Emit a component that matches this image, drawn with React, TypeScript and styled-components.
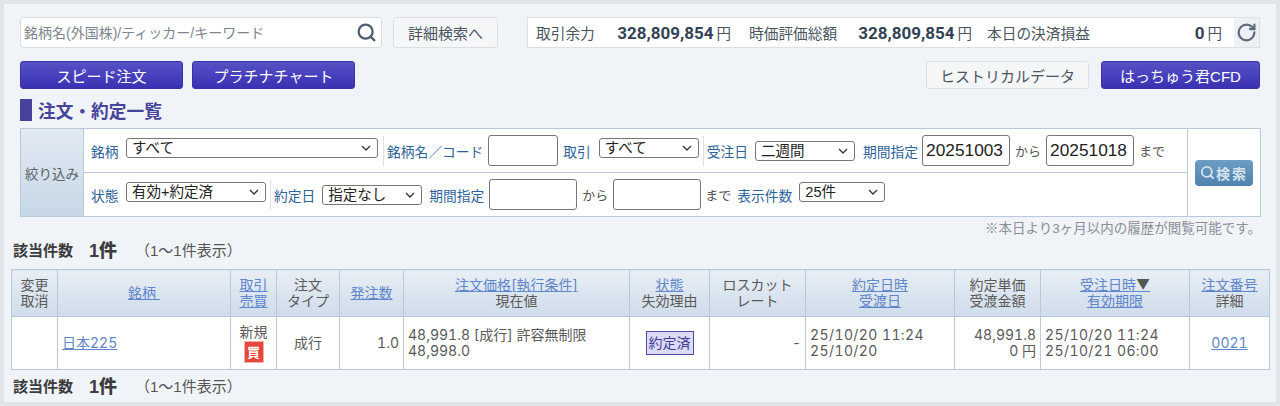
import React from "react";
import styled, { createGlobalStyle } from "styled-components";
import { Search, RotateCw } from "lucide-react";

const FONT = `"Liberation Sans", "Noto Sans CJK JP", sans-serif`;
const TABLE_FONT = `Inter, "Noto Sans CJK JP", sans-serif`;
const CHEVRON = `url("data:image/svg+xml,%3Csvg xmlns='http://www.w3.org/2000/svg' width='10' height='6' viewBox='0 0 10 6'%3E%3Cpath d='M1 1l4 4 4-4' fill='none' stroke='%23333' stroke-width='1.3'/%3E%3C/svg%3E")`;

const Global = createGlobalStyle`
  html, body { margin: 0; padding: 0; background: #dfe4e9; }
  body { font-family: ${FONT}; width: 1280px; height: 406px; overflow: hidden; }
`;

const Panel = styled.div`
  margin: 4px;
  width: 1272px;
  height: 398px;
  box-sizing: border-box;
  background: #f0f3f8;
  padding: 13px 7px 0;
  color: #444;
`;
const TopRow = styled.div`
  display: flex;
  align-items: stretch;
  height: 31px;
  padding: 0 9px;
`;
const SearchBox = styled.div`
  width: 362px;
  box-sizing: border-box;
  background: #fff;
  border: 1px solid #d9dee5;
  border-radius: 3px;
  display: flex;
  align-items: center;
  justify-content: space-between;
  padding: 0 4px 1px 3px;
  color: #7d858e;
  font-size: 14px;
`;
const LightButton = styled.button<{ $w: number; $l?: number }>`
  width: ${(p) => p.$w}px;
  margin-left: ${(p) => p.$l ?? 0}px;
  box-sizing: border-box;
  background: #f5f6f8;
  border: 1px solid #dcdfe4;
  border-radius: 3px;
  color: #4a5560;
  font: 15px ${FONT};
  padding: 0;
`;
const Balance = styled.div`
  margin-left: 29px;
  width: 733px;
  box-sizing: border-box;
  background: #fff;
  border: 1px solid #dcdfe5;
  display: flex;
  align-items: stretch;
`;
const BalanceCell = styled.div<{ $w: number; $pl: number; $pr: number }>`
  width: ${(p) => p.$w}px;
  box-sizing: border-box;
  display: flex;
  align-items: center;
  justify-content: space-between;
  padding: 0 ${(p) => p.$pr}px 0 ${(p) => p.$pl}px;
  font-size: 14.7px;
  color: #4a5560;
  position: relative;
  & + &::before {
    content: "";
    position: absolute;
    left: 0;
    top: 5px;
    bottom: 5px;
    width: 1px;
    background: #dcdfe5;
  }
`;
const Amount = styled.span`
  font: 700 17px Roboto, ${FONT};
  color: #334355;
  & > small { font: 400 14.5px ${FONT}; color: #4a5560; margin-left: 3px; }
`;
const Refresh = styled.div`
  flex: 1;
  background: #eef0f3;
  display: flex;
  align-items: center;
  justify-content: center;
  color: #5d6c7b;
`;
const ActionRow = styled.div`
  display: flex;
  align-items: stretch;
  height: 28px;
  margin-top: 13px;
  padding: 0 9px;
  gap: 9px;
`;
const BlueButton = styled.button<{ $w: number; $l?: number }>`
  width: ${(p) => p.$w}px;
  margin-left: ${(p) => p.$l ?? 0}px;
  box-sizing: border-box;
  background: linear-gradient(#5651c6, #3a31b3);
  border: 1px solid #3a33a8;
  border-radius: 3px;
  color: #fff;
  font: 15px ${FONT};
  padding: 0;
`;
const Spacer = styled.div`
  flex: 1;
`;
const Title = styled.h2`
  margin: 10px 0 0 9px;
  height: 22px;
  display: flex;
  align-items: center;
  gap: 6px;
  font: 700 17.7px ${FONT};
  color: #47439a;
  &::before {
    content: "";
    width: 12px;
    height: 22px;
    background: #47439a;
  }
`;
const FilterBox = styled.div`
  margin: 7px 0 0 9px;
  width: 1241px;
  height: 89px;
  box-sizing: border-box;
  border: 1px solid #b9c8da;
  background: #fff;
  display: flex;
`;
const FilterHead = styled.div`
  width: 63px;
  box-sizing: border-box;
  background: linear-gradient(#e2eaf3, #c7d7e7);
  border-right: 1px solid #b9c8da;
  display: flex;
  align-items: center;
  justify-content: center;
  font-size: 13.5px;
  color: #606468;
`;
const FilterRows = styled.div`
  width: 1103px;
  display: flex;
  flex-direction: column;
`;
const FilterRow = styled.div`
  flex: 1;
  display: flex;
  align-items: center;
  padding-left: 7px;
  & + & { border-top: 1px solid #b9c8da; }
`;
const FieldLabel = styled.span<{ $l?: number; $r?: number }>`
  color: #2f6299;
  font-size: 13.75px;
  white-space: nowrap;
  margin-left: ${(p) => p.$l ?? 0}px;
  margin-right: ${(p) => p.$r ?? 6}px;
`;
const Select = styled.select<{ $w: number; $up?: boolean }>`
  width: ${(p) => p.$w}px;
  height: 20px;
  box-sizing: border-box;
  appearance: none;
  background: #fff ${CHEVRON} no-repeat right 6px center;
  border: 1px solid #777;
  border-radius: 3px;
  padding: 0 0 0 5px;
  font: 14.5px ${FONT};
  color: #222;
  margin-top: ${(p) => (p.$up ? -6 : 0)}px;
`;
const TextBox = styled.input<{ $w: number }>`
  width: ${(p) => p.$w}px;
  height: 31px;
  box-sizing: border-box;
  border: 1px solid #777;
  border-radius: 3px;
  padding: 0 3px;
  font: 17.3px ${FONT};
  color: #222;
  background: #fff;
`;
const Divider = styled.span<{ $l: number; $r: number }>`
  width: 1px;
  height: 30px;
  background: #d5e1ee;
  margin: 0 ${(p) => p.$r}px 0 ${(p) => p.$l}px;
`;
const Plain = styled.span<{ $l: number; $r: number }>`
  color: #555;
  font-size: 13px;
  white-space: nowrap;
  margin: 0 ${(p) => p.$r}px 0 ${(p) => p.$l}px;
`;
const SearchCell = styled.div`
  flex: 1;
  border-left: 1px solid #b9c8da;
  display: flex;
  align-items: center;
  justify-content: center;
`;
const SearchButton = styled.button`
  width: 58px;
  height: 26px;
  background: linear-gradient(#6d9cc4, #4f83ad);
  border: 0;
  border-radius: 4px;
  color: #d5e3ef;
  font: 700 14px ${FONT};
  letter-spacing: 2px;
  display: flex;
  align-items: center;
  justify-content: center;
  gap: 1px;
  padding: 0;
`;
const Note = styled.div`
  width: 1250px;
  margin-top: 4px;
  text-align: right;
  font-size: 13.5px;
  line-height: 16px;
  color: #8b8f95;
`;
const Count = styled.div<{ $top: number }>`
  margin: ${(p) => p.$top}px 0 0 2px;
  height: 20px;
  display: flex;
  align-items: center;
  font: 700 15px ${FONT};
  color: #3c3c3c;
  & > b { font-size: 18px; margin-left: 16px; }
  & > span { font-weight: 400; font-size: 15px; color: #555; margin-left: 18px; }
`;
const Table = styled.table`
  margin-top: 10px;
  width: 1258px;
  table-layout: fixed;
  border-collapse: collapse;
  background: #fff;
  font: 14px/16px ${TABLE_FONT};
  font-variant-numeric: tabular-nums;
  color: #5a5a5a;
`;
const Th = styled.th`
  height: 47px;
  padding: 0;
  box-sizing: border-box;
  background: linear-gradient(#e8eef5, #cfdcea);
  border: 1px solid #b9c8da;
  font-weight: 400;
  text-align: center;
`;
const Td = styled.td<{ $align?: string; $spaced?: boolean }>`
  height: 53px;
  padding: 0 4px;
  box-sizing: border-box;
  border: 1px solid #b9c8da;
  text-align: ${(p) => p.$align ?? "left"};
  letter-spacing: ${(p) => (p.$spaced ? "0.4px" : "0")};
  white-space: nowrap;
`;
const A = styled.a`
  color: #5f86c9;
  text-decoration: underline;
`;
const SortMark = styled.span`
  color: #4e5a52;
`;
const BuyTag = styled.span`
  display: block;
  width: 20px;
  height: 22px;
  margin: 1px auto 0;
  background: #e8463c;
  border: 1px solid #f3b0a8;
  box-sizing: border-box;
  color: #fff;
  font-size: 13px;
  font-weight: 700;
  line-height: 20px;
  text-align: center;
`;
const Status = styled.span`
  display: inline-block;
  border: 1px solid #4a4aa8;
  background: #dcdaf5;
  color: #3f3f95;
  font-size: 14px;
  line-height: 22px;
  padding: 0 2px;
`;

const widths = [46, 173, 46, 63, 64, 226, 80, 96, 149, 86, 149, 80];

export default function App() {
  return (
    <>
      <Global />
      <Panel>
        <TopRow>
          <SearchBox>
            銘柄名(外国株)/ティッカー/キーワード
            <Search size={21} strokeWidth={2.6} color="#4f6072" />
          </SearchBox>
          <LightButton $w={105} $l={11}>詳細検索へ</LightButton>
          <Balance>
            <BalanceCell $w={213} $pl={8} $pr={10}>
              取引余力<Amount>328,809,854<small>円</small></Amount>
            </BalanceCell>
            <BalanceCell $w={241} $pl={8} $pr={10}>
              時価評価総額<Amount>328,809,854<small>円</small></Amount>
            </BalanceCell>
            <BalanceCell $w={252} $pl={5} $pr={12}>
              本日の決済損益<Amount>0<small>円</small></Amount>
            </BalanceCell>
            <Refresh><RotateCw size={21} strokeWidth={2.6} /></Refresh>
          </Balance>
        </TopRow>
        <ActionRow>
          <BlueButton $w={163}>スピード注文</BlueButton>
          <BlueButton $w={163}>プラチナチャート</BlueButton>
          <Spacer />
          <LightButton $w={163}>ヒストリカルデータ</LightButton>
          <BlueButton $w={159} $l={3}>はっちゅう君CFD</BlueButton>
        </ActionRow>
        <Title>注文・約定一覧</Title>
        <FilterBox>
          <FilterHead>絞り込み</FilterHead>
          <FilterRows>
            <FilterRow>
              <FieldLabel $r={7.5}>銘柄</FieldLabel>
              <Select $w={252} $up defaultValue="a"><option value="a">すべて</option></Select>
              <Divider $l={5} $r={3} />
              <FieldLabel $r={5}>銘柄名／コード</FieldLabel>
              <TextBox $w={70} />
              <FieldLabel $l={5} $r={8}>取引</FieldLabel>
              <Select $w={100} $up defaultValue="a"><option value="a">すべて</option></Select>
              <Divider $l={4} $r={3} />
              <FieldLabel $r={7}>受注日</FieldLabel>
              <Select $w={100} defaultValue="a"><option value="a">二週間</option></Select>
              <FieldLabel $l={8} $r={4}>期間指定</FieldLabel>
              <TextBox $w={88} defaultValue="20251003" />
              <Plain $l={5} $r={5}>から</Plain>
              <TextBox $w={88} defaultValue="20251018" />
              <Plain $l={5} $r={0}>まで</Plain>
            </FilterRow>
            <FilterRow>
              <FieldLabel $r={7.5}>状態</FieldLabel>
              <Select $w={140} $up defaultValue="a"><option value="a">有効+約定済</option></Select>
              <Divider $l={4} $r={3} />
              <FieldLabel $r={7}>約定日</FieldLabel>
              <Select $w={100} defaultValue="a"><option value="a">指定なし</option></Select>
              <FieldLabel $l={7} $r={5}>期間指定</FieldLabel>
              <TextBox $w={88} />
              <Plain $l={5} $r={5}>から</Plain>
              <TextBox $w={88} />
              <Plain $l={4} $r={6}>まで</Plain>
              <FieldLabel $r={7}>表示件数</FieldLabel>
              <Select $w={86} $up defaultValue="a"><option value="a">25件</option></Select>
            </FilterRow>
          </FilterRows>
          <SearchCell>
            <SearchButton>
              <Search size={15} strokeWidth={3} />検索
            </SearchButton>
          </SearchCell>
        </FilterBox>
        <Note>※本日より3ヶ月以内の履歴が閲覧可能です。</Note>
        <Count $top={2}>該当件数<b>1件</b><span>（1～1件表示）</span></Count>
        <Table>
          <colgroup>
            {widths.map((w, i) => <col key={i} style={{ width: w }} />)}
          </colgroup>
          <thead>
            <tr>
              <Th>変更<br />取消</Th>
              <Th><A>銘柄&nbsp;</A></Th>
              <Th><A>取引</A><br /><A>売買</A></Th>
              <Th>注文<br />タイプ</Th>
              <Th><A>発注数</A></Th>
              <Th><A>注文価格[執行条件]</A><br />現在値</Th>
              <Th><A>状態</A><br />失効理由</Th>
              <Th>ロスカット<br />レート</Th>
              <Th><A>約定日時</A><br /><A>受渡日</A></Th>
              <Th>約定単価<br />受渡金額</Th>
              <Th><A>受注日時<SortMark>▼</SortMark></A><br /><A>有効期限</A></Th>
              <Th><A>注文番号</A><br />詳細</Th>
            </tr>
          </thead>
          <tbody>
            <tr>
              <Td />
              <Td><A>日本225</A></Td>
              <Td $align="center">新規<BuyTag>買</BuyTag></Td>
              <Td $align="center">成行</Td>
              <Td $align="right">1.0</Td>
              <Td>48,991.8 [成行] 許容無制限<br />48,998.0</Td>
              <Td $align="center"><Status>約定済</Status></Td>
              <Td $align="right">-</Td>
              <Td $spaced>25/10/20 11:24<br />25/10/20</Td>
              <Td $align="right">48,991.8<br />0 円</Td>
              <Td $spaced>25/10/20 11:24<br />25/10/21 06:00</Td>
              <Td $align="center"><A>0021</A></Td>
            </tr>
          </tbody>
        </Table>
        <Count $top={5}>該当件数<b>1件</b><span>（1～1件表示）</span></Count>
      </Panel>
    </>
  );
}
